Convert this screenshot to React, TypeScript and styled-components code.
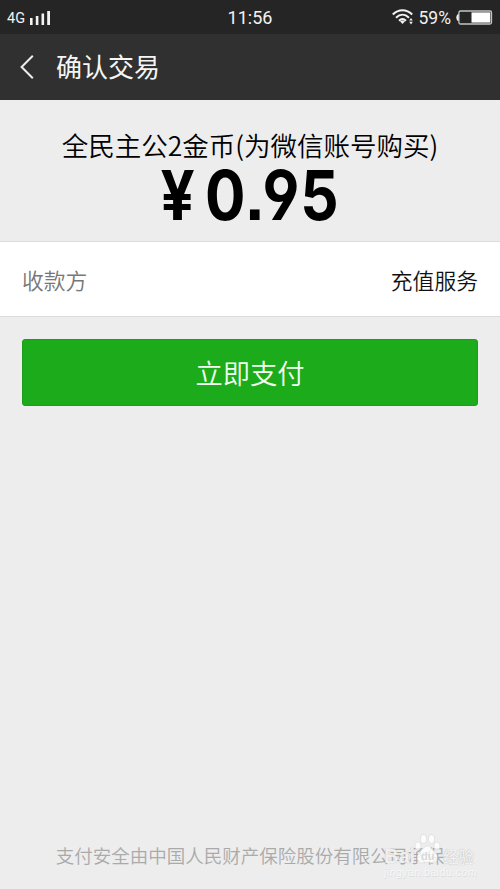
import React from 'react';
import styled, { createGlobalStyle } from 'styled-components';

const GlobalStyle = createGlobalStyle`
  * { box-sizing: border-box; }
  body { margin: 0; background: #ededed; font-family: "Noto Sans CJK SC", sans-serif; }
`;

const Screen = styled.div`
  position: relative;
  display: flex;
  flex-direction: column;
  width: 500px;
  height: 889px;
  overflow: hidden;
  background: #ededed;
`;

const StatusBar = styled.header`
  display: grid;
  grid-template-columns: 1fr auto 1fr;
  align-items: center;
  height: 34px;
  padding: 0 7px 0 7px;
  background: #252525;
  color: #f2f2f2;
`;

const StatusGroup = styled.div<{ $end?: boolean }>`
  display: flex;
  align-items: center;
  justify-content: ${(p) => (p.$end ? 'flex-end' : 'flex-start')};
`;

const StatusText = styled.span<{ $size: number; $top?: number }>`
  font: 400 ${(p) => p.$size}px/20px Roboto, sans-serif;
  padding-top: ${(p) => p.$top ?? 0}px;
  white-space: nowrap;
`;

const NavBar = styled.nav`
  display: flex;
  align-items: center;
  gap: 21px;
  height: 66px;
  padding-left: 20px;
  background: #303030;
  color: #f5f5f5;
`;

const NavTitle = styled.h1`
  margin: 0 0 2px;
  font-size: 26px;
  line-height: 38px;
  font-weight: 400;
`;

const Summary = styled.section`
  display: flex;
  flex-direction: column;
  align-items: center;
  height: 142px;
  padding-top: 26px;
  border-bottom: 1px solid #dcdcdc;
`;

const Product = styled.div`
  font-size: 26.5px;
  line-height: 38px;
  font-weight: 350;
  color: #000;
  white-space: nowrap;
`;

const Price = styled.div`
  display: flex;
  gap: 11px;
  font: 700 69px/62px Inter, sans-serif;
  font-feature-settings: "ss01" 1, "ss07" 1;
  letter-spacing: 1px;
  transform: scaleX(0.87);
  color: #000;
`;

const Row = styled.section`
  display: flex;
  align-items: center;
  justify-content: space-between;
  height: 75px;
  padding: 0 22px;
  background: #fff;
  border-bottom: 1px solid #dcdcdc;
`;

const RowText = styled.span<{ $muted?: boolean }>`
  padding-top: 1px;
  font-size: 21.8px;
  line-height: 32px;
  font-weight: 350;
  color: ${(p) => (p.$muted ? '#777' : '#111')};
`;

const PayButton = styled.button`
  margin: 22px 22px 0;
  height: 67px;
  padding: 0 0 2px;
  border: 1px solid #1b9d1b;
  border-radius: 3px;
  background: #1cac1b;
  color: #f2fff0;
  font: 350 27.3px/40px "Noto Sans CJK SC", sans-serif;
`;

const Footer = styled.footer`
  margin-top: auto;
  padding-bottom: 20px;
  text-align: center;
  font-size: 18.5px;
  line-height: 28px;
  font-weight: 350;
  color: #aaa;
  white-space: nowrap;
`;

const Watermark = styled.div`
  position: absolute;
  left: 384px;
  top: 832px;
  width: 94px;
  height: 48px;
  color: rgba(250, 250, 250, 0.9);
`;

const WatermarkBrand = styled.div`
  display: flex;
  align-items: center;
  justify-content: space-between;
  height: 20px;
  margin-top: 14px;
  padding-right: 4px;
  font: 700 20px/20px "Liberation Sans", "Noto Sans CJK SC", sans-serif;
  text-shadow: 0 0 1px rgba(120, 120, 120, 0.6);
`;

const WatermarkName = styled.span`
  font: 500 15.5px/20px "Noto Sans CJK SC", sans-serif;
`;

const WatermarkUrl = styled.div`
  font: 400 10.5px/12px "Liberation Sans", sans-serif;
  color: #f8f8f8;
  text-shadow: 0.5px 0.5px 0 #dadada;
  letter-spacing: 0.5px;
`;

const SignalIcon = () => (
  <svg width="21" height="15" viewBox="0 0 21 15" fill="#f2f2f2">
    <rect x="0" y="8" width="2.6" height="7" />
    <rect x="5.8" y="6" width="2.6" height="9" />
    <rect x="11.5" y="3.5" width="2.6" height="11.5" />
    <rect x="17.2" y="1" width="2.8" height="14" />
  </svg>
);

const WifiIcon = () => (
  <svg width="22" height="16" viewBox="0 0 22 16" fill="none" stroke="#f2f2f2" strokeWidth="2">
    <path d="M0.8 5.5C6.5-.2 14.5-.2 20.2 5.5M4 8.7C8 4.8 13 4.8 17 8.7M7 11.8C9.4 9.5 11.6 9.5 14 11.8" />
    <path d="M8 12.2Q10.5 10.8 13 12.2L10.5 15Z" fill="#f2f2f2" stroke="none" />
    <path d="M17.2 11.6L19 9L20.8 11.6ZM17.2 12.8L19 15.4L20.8 12.8Z" fill="#f2f2f2" stroke="none" />
  </svg>
);

const BatteryIcon = () => (
  <svg width="37" height="15" viewBox="0 0 37 15">
    <path d="M3 4H2Q.3 5 .3 7.5T2 11H3Z" fill="#f2f2f2" />
    <rect x="2.9" y="1" width="32.6" height="13" rx="1.5" fill="none" stroke="#c4c4c4" strokeWidth="1.3" />
    <rect x="15.5" y="2.4" width="18.8" height="10.2" fill="#fff" />
  </svg>
);

const BackIcon = () => (
  <svg width="15" height="26" viewBox="0 0 15 26" fill="none" stroke="#eee" strokeWidth="2">
    <path d="M12.8 1.8L1.6 13L12.8 24.2" />
  </svg>
);

const Paw = styled.svg`
  position: absolute;
  left: 30px;
  top: 1px;
`;

const Spacer = styled.span<{ $w: number }>`
  width: ${(p) => p.$w}px;
`;

export default function App() {
  return (
    <Screen>
      <GlobalStyle />
      <StatusBar>
        <StatusGroup>
          <StatusText $size={14.5} $top={4}>4G</StatusText>
          <Spacer $w={5} />
          <SignalIcon />
        </StatusGroup>
        <StatusText $size={18} $top={1}>11:56</StatusText>
        <StatusGroup $end>
          <WifiIcon />
          <Spacer $w={5} />
          <StatusText $size={17.5} $top={1}>59%</StatusText>
          <Spacer $w={5} />
          <BatteryIcon />
        </StatusGroup>
      </StatusBar>
      <NavBar>
        <BackIcon />
        <NavTitle>确认交易</NavTitle>
      </NavBar>
      <Summary>
        <Product>全民主公2金币(为微信账号购买)</Product>
        <Price><span>¥</span><span>0.95</span></Price>
      </Summary>
      <Row>
        <RowText $muted>收款方</RowText>
        <RowText>充值服务</RowText>
      </Row>
      <PayButton>立即支付</PayButton>
      <Footer>支付安全由中国人民财产保险股份有限公司承保</Footer>
      <Watermark>
        <WatermarkBrand><span>Bai</span><WatermarkName>经验</WatermarkName></WatermarkBrand>
        <Paw width="27" height="33" viewBox="0 0 27 33" fill="#fff" fillOpacity=".8" stroke="#bbb" strokeOpacity=".5" strokeWidth=".6">
          <ellipse cx="4" cy="13" rx="3" ry="4" />
          <ellipse cx="9.5" cy="6" rx="3" ry="4.3" />
          <ellipse cx="17.5" cy="6" rx="3" ry="4.3" />
          <ellipse cx="23" cy="13" rx="3" ry="4" />
          <path d="M13.5 13C17 13 18 17 21 19C25 22 24 30 19 30C16 30 15 29 13.5 29C12 29 10 30 8 30C2 30 2 22 6 19C9 17 10 13 13.5 13Z" />
          <text x="7" y="27" fill="#d0d0d0" stroke="none" fontFamily="Liberation Sans, sans-serif" fontWeight="700" fontSize="11">du</text>
        </Paw>
        <WatermarkUrl>jingyan.baidu.com</WatermarkUrl>
      </Watermark>
    </Screen>
  );
}
